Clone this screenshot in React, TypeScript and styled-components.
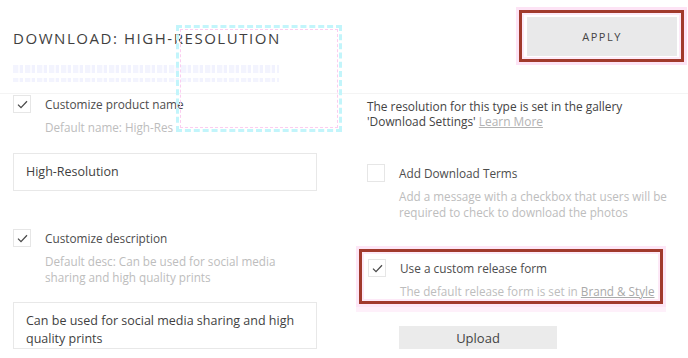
import React from 'react';
import styled, { createGlobalStyle } from 'styled-components';

const GlobalStyle = createGlobalStyle`
	html, body {
		margin: 0;
		padding: 0;
		background: #fff;
	}
	body {
		font-family: 'Open Sans', 'Noto Sans', Arial, sans-serif;
		color: #4a4a4a;
	}
`;

const Page = styled.div`
	position: relative;
	width: 688px;
	height: 358px;
	overflow: hidden;
	box-sizing: border-box;
	padding: 0 0 0 13px;
`;

const Header = styled.div`
	display: flex;
	justify-content: space-between;
	align-items: flex-start;
	height: 94px;
	border-bottom: 1px solid #f4f4f4;
	margin: 0 0 1px -13px;
	padding: 10px 4px 0 13px;
	box-sizing: border-box;
`;

const Title = styled.h1`
	margin: 18px 0 0;
	font-size: 15px;
	font-weight: 400;
	letter-spacing: 1.55px;
	color: #3f3f3f;
	line-height: 20px;
`;

const Highlight = styled.div`
	border: 3px solid #a13a2c;
	box-shadow: 0 0 0 3px #fde3f5, inset 0 0 0 2px #fde9f7;
	padding: 4px 4px 3px 5px;
	background: #fff;
`;

const ApplyButton = styled.button`
	width: 150px;
	height: 39px;
	border: none;
	background: #e9e9ea;
	font-family: inherit;
	font-size: 11px;
	letter-spacing: 1.5px;
	color: #444;
	padding: 0;
	cursor: pointer;
`;

const Columns = styled.div`
	display: grid;
	grid-template-columns: 304px 308px;
	column-gap: 50px;
`;

const Column = styled.div`
	display: flex;
	flex-direction: column;
	align-items: flex-start;
`;

const CheckRow = styled.div`
	display: flex;
	align-items: flex-start;
	gap: 14px;
`;

const Box = styled.span`
	flex: none;
	width: 18px;
	height: 18px;
	box-sizing: border-box;
	border: 1px solid #e6e6e6;
	background: #fff;
	display: flex;
	align-items: center;
	justify-content: center;
`;

const CheckText = styled.div`
	display: flex;
	flex-direction: column;
	gap: 6px;
`;

const Label = styled.div`
	font-size: 11.8px;
	line-height: 18px;
	color: #4d4d4d;
`;

const Hint = styled.div`
	font-size: 11.7px;
	line-height: 16px;
	color: #bdbdbd;
	white-space: nowrap;
	a {
		color: #a9a9a9;
		text-decoration: underline;
	}
`;

const TextBox = styled.div<{ $top: number }>`
	margin-top: ${(p) => p.$top}px;
	width: 304px;
	box-sizing: border-box;
	border: 1px solid #e8e8e8;
	padding: 9px 12px 0;
	min-height: 38px;
	font-size: 12.5px;
	line-height: 18px;
	color: #3f3f3f;
`;

const Info = styled.p`
	margin: 4px 0 0;
	font-size: 11.9px;
	line-height: 15px;
	color: #444;
	a {
		color: #b3b3b3;
		text-decoration: underline;
	}
`;

const Section = styled.div<{ $top: number }>`
	margin-top: ${(p) => p.$top}px;
`;

const ReleaseBox = styled(Highlight)`
	width: 304px;
	box-sizing: border-box;
	margin: 0 0 0 -8px;
	padding: 7px 6px 2px 6px;
	box-shadow: 0 0 0 3px #fde6f6, 0 5px 0 3px #fef0fa, inset 0 0 0 2px #fde9f7;
`;

const UploadButton = styled.button`
	margin: 22px 0 0 32px;
	width: 158px;
	height: 23px;
	border: none;
	background: #ebebeb;
	font-family: inherit;
	font-size: 13px;
	color: #444;
	padding: 0;
`;

/* screenshot artefacts: a dashed selection frame and a faded copy of the title */
const Ghost = styled.div`
	position: absolute;
	left: 176px;
	top: 25px;
	width: 160px;
	height: 101px;
	border: 3px dashed #c2f5fb;
	outline: 1px dashed #fbcdf0;
	outline-offset: -5px;
	pointer-events: none;
`;

const GhostStrip = styled.div<{ $top: number; $h: number; $w: number }>`
	position: absolute;
	left: 13px;
	top: ${(p) => p.$top}px;
	width: ${(p) => p.$w}px;
	height: ${(p) => p.$h}px;
	background: repeating-linear-gradient(90deg, #f3f4fe 0 5px, #fbfbff 5px 7px, #f1f2fe 7px 10px, #fff 10px 12px);
	pointer-events: none;
`;

const Check = ({ on }: { on?: boolean }) => (
	<Box>
		{on && (
			<svg width='11' height='9' viewBox='0 0 11 9' fill='none'>
				<path d='M1 4.6 L4 7.6 L10 1.2' stroke='#4a4a4a' strokeWidth='1.3' />
			</svg>
		)}
	</Box>
);

const App = () => (
	<>
		<GlobalStyle />
		<Page>
			<Header>
				<Title>DOWNLOAD: HIGH-RESOLUTION</Title>
				<Highlight>
					<ApplyButton>APPLY</ApplyButton>
				</Highlight>
			</Header>
			<Columns>
				<Column>
					<CheckRow>
						<Check on />
						<CheckText>
							<Label>Customize product name</Label>
							<Hint>Default name: High-Res</Hint>
						</CheckText>
					</CheckRow>
					<TextBox $top={18}>High-Resolution</TextBox>
					<Section $top={38}>
						<CheckRow>
							<Check on />
							<CheckText>
								<Label>Customize description</Label>
								<Hint>
									Default desc: Can be used for social media
									<br />
									sharing and high quality prints
								</Hint>
							</CheckText>
						</CheckRow>
					</Section>
					<TextBox $top={17}>
						Can be used for social media sharing and high
						<br />
						quality prints
					</TextBox>
				</Column>
				<Column>
					<Info>
						The resolution for this type is set in the gallery
						<br />
						'Download Settings' <a>Learn More</a>
					</Info>
					<Section $top={35}>
						<CheckRow>
							<Check />
							<CheckText>
								<Label>Add Download Terms</Label>
								<Hint>
									Add a message with a checkbox that users will be
									<br />
									required to check to download the photos
								</Hint>
							</CheckText>
						</CheckRow>
					</Section>
					<Section $top={29}>
						<ReleaseBox>
							<CheckRow>
								<Check on />
								<CheckText>
									<Label>Use a custom release form</Label>
									<Hint>
										The default release form is set in <a>Brand &amp; Style</a>
									</Hint>
								</CheckText>
							</CheckRow>
						</ReleaseBox>
					</Section>
					<UploadButton>Upload</UploadButton>
				</Column>
			</Columns>
			<GhostStrip $top={65} $h={8} $w={266} />
			<GhostStrip $top={78} $h={4} $w={266} />
			<Ghost />
		</Page>
	</>
);

export default App;
